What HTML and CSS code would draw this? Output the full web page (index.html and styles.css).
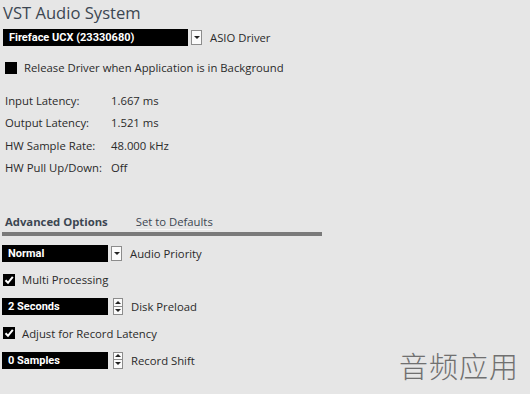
FILE: index.html
```html
<!DOCTYPE html>
<html lang="en">

<head>
    <meta charset="UTF-8">
    <title>VST Audio System</title>
    <link rel="stylesheet" href="styles.css">
</head>

<body>
    <div class="panel">
        <h1 class="title">VST Audio System</h1>

        <div class="row driver-row">
            <div class="field field-wide">Fireface UCX (23330680)</div>
            <span class="drop-btn"><span class="tri-down"></span></span>
            <span class="label">ASIO Driver</span>
        </div>

        <div class="row check-row release-row">
            <span class="box"></span>
            <span class="label">Release Driver when Application is in Background</span>
        </div>

        <div class="info">
            <span>Input Latency:</span><span>1.667 ms</span>
            <span>Output Latency:</span><span>1.521 ms</span>
            <span>HW Sample Rate:</span><span>48.000 kHz</span>
            <span>HW Pull Up/Down:</span><span>Off</span>
        </div>

        <div class="tabs">
            <span class="tab active">Advanced Options</span>
            <span class="tab link">Set to Defaults</span>
        </div>

        <div class="options">
            <div class="row">
                <div class="field">Normal</div>
                <span class="drop-btn"><span class="tri-down"></span></span>
                <span class="label">Audio Priority</span>
            </div>
            <div class="row check-row">
                <span class="box checked">
                    <svg width="10" height="10" viewBox="0 0 10 10">
                        <path d="M1.5 5.2 L4 7.8 L8.8 1.8" fill="none" stroke="#fff" stroke-width="2"/>
                    </svg>
                </span>
                <span class="label">Multi Processing</span>
            </div>
            <div class="row">
                <div class="field">2 Seconds</div>
                <span class="spin"><span class="spin-btn"><span class="tri-up"></span></span><span class="spin-btn"><span class="tri-down"></span></span></span>
                <span class="label">Disk Preload</span>
            </div>
            <div class="row check-row">
                <span class="box checked">
                    <svg width="10" height="10" viewBox="0 0 10 10">
                        <path d="M1.5 5.2 L4 7.8 L8.8 1.8" fill="none" stroke="#fff" stroke-width="2"/>
                    </svg>
                </span>
                <span class="label">Adjust for Record Latency</span>
            </div>
            <div class="row">
                <div class="field">0 Samples</div>
                <span class="spin"><span class="spin-btn"><span class="tri-up"></span></span><span class="spin-btn"><span class="tri-down"></span></span></span>
                <span class="label">Record Shift</span>
            </div>
        </div>
    </div>

    <div class="watermark">音频应用</div>
</body>

</html>
```

FILE: styles.css
```css
* {
    box-sizing: border-box;
    margin: 0;
    padding: 0;
}

html,
body {
    height: 100%;
}

body {
    background-color: #e6e6e6;
    color: #2a2a2a;
    font-family: "Open Sans", "DejaVu Sans", sans-serif;
    font-size: 11.3px;
    position: relative;
    overflow: hidden;
}

.panel {
    display: flex;
    flex-direction: column;
    padding: 2px 0 0 2px;
    width: 322px;
}

.title {
    color: #3c4652;
    font-size: 16.6px;
    font-weight: normal;
    line-height: 22px;
    padding-left: 1px;
}

.row {
    align-items: center;
    display: flex;
    height: 17px;
}

.driver-row {
    margin-top: 5px;
    padding-left: 1px;
}

.field {
    background-color: #000;
    color: #fff;
    font-family: Roboto, "Open Sans", sans-serif;
    font-size: 11px;
    font-weight: bold;
    height: 17px;
    line-height: 17px;
    padding-left: 6px;
    width: 106px;
}

.field-wide {
    width: 185px;
}

.drop-btn {
    align-items: center;
    background-color: #fbfbfb;
    border: 1px solid #8c8c8c;
    display: flex;
    height: 15px;
    justify-content: center;
    margin-left: 3px;
    width: 11px;
}

.tri-down {
    border-left: 3px solid transparent;
    border-right: 3px solid transparent;
    border-top: 3px solid #222;
}

.tri-up {
    border-bottom: 3px solid #222;
    border-left: 3px solid transparent;
    border-right: 3px solid transparent;
}

.spin {
    display: flex;
    flex-direction: column;
    margin-left: 5px;
}

.spin-btn {
    align-items: center;
    background-color: #fbfbfb;
    border: 1px solid #8c8c8c;
    display: flex;
    height: 8.5px;
    justify-content: center;
    width: 10px;
}

.spin-btn + .spin-btn {
    border-top: none;
}

.label {
    margin-left: 8px;
}

.check-row .label {
    margin-left: 7px;
}

.release-row {
    margin-top: 13px;
    padding-left: 2px;
}

.box {
    align-items: center;
    background-color: #000;
    display: flex;
    height: 12px;
    justify-content: center;
    margin-left: 1px;
    width: 12px;
}

.info {
    display: grid;
    grid-auto-rows: 22.4px;
    grid-template-columns: 106px auto;
    line-height: 22.4px;
    margin-top: 14px;
    padding-left: 3px;
}

.tabs {
    border-bottom: 4px solid #7a7a7a;
    display: flex;
    gap: 28px;
    margin-top: 34px;
    padding: 0 0 2px 3px;
}

.tab {
    line-height: 16px;
}

.tab.active {
    color: #3c4652;
    font-weight: bold;
}

.tab.link {
    border-bottom: 1px solid #f6f6f6;
    color: #3c4652;
    line-height: 15px;
}

.options {
    display: flex;
    flex-direction: column;
    gap: 9.75px;
    margin-top: 9px;
}

.watermark {
    bottom: 8px;
    color: #707070;
    font-family: "Noto Sans CJK SC", sans-serif;
    font-size: 29px;
    font-weight: 300;
    letter-spacing: 1px;
    position: absolute;
    right: 11px;
}
```
